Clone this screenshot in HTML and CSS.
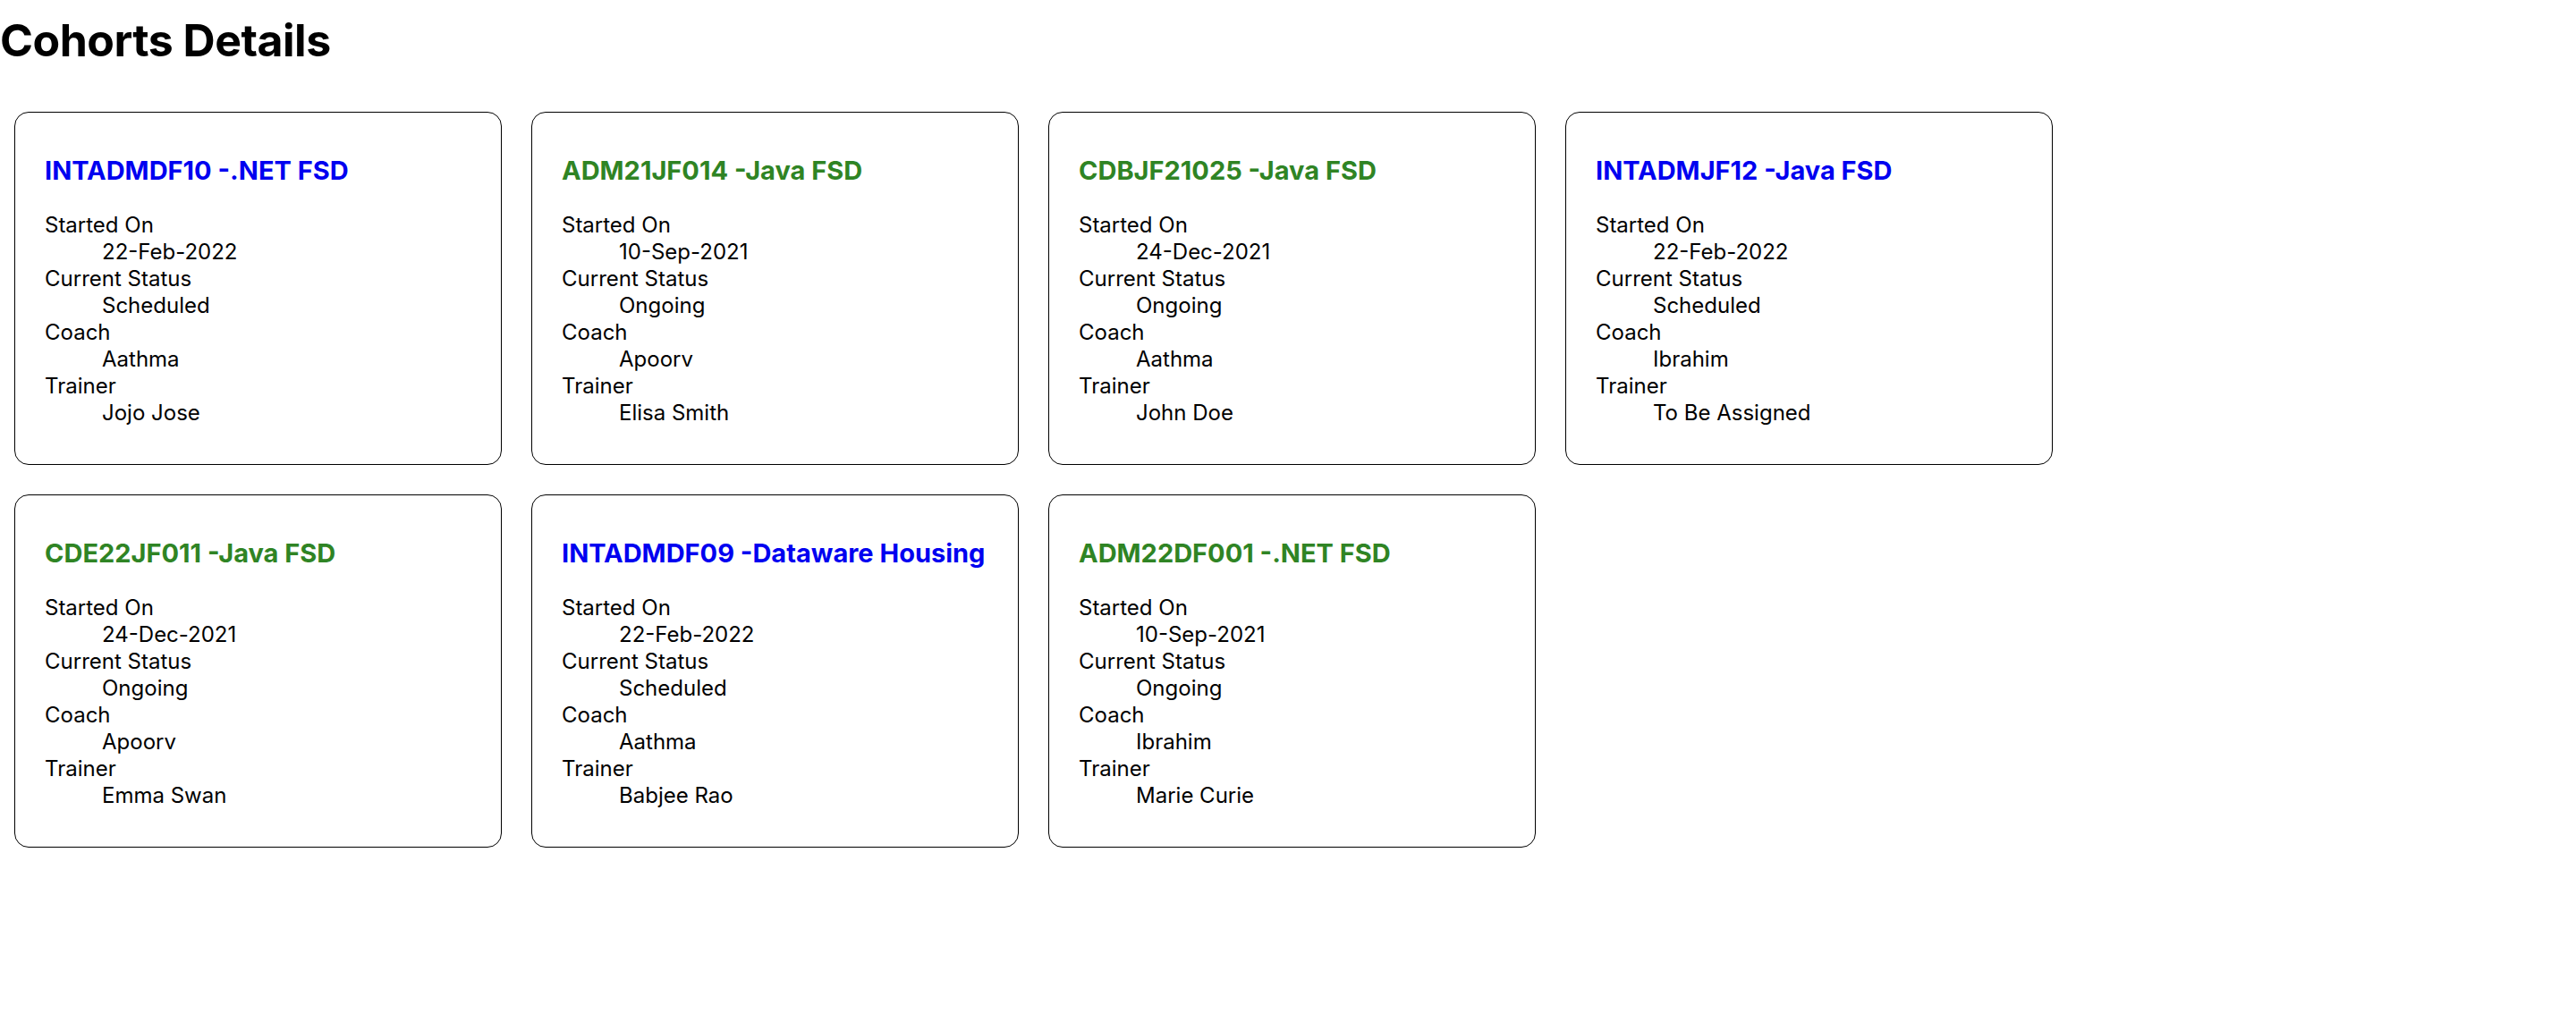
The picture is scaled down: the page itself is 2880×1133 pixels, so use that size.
FILE: index.html
```html
<!DOCTYPE html>
<html lang="en">
<head>
<meta charset="utf-8">
<title>Cohorts Details</title>
<link rel="stylesheet" href="styles.css">
</head>
<body>
<h1 class="page-title">Cohorts Details</h1>
<div class="cohort-grid">
  <div class="cohort-card">
    <h3 class="cohort-name scheduled">INTADMDF10 -.NET FSD</h3>
    <dl class="cohort-info">
      <dt>Started On</dt><dd>22-Feb-2022</dd>
      <dt>Current Status</dt><dd>Scheduled</dd>
      <dt>Coach</dt><dd>Aathma</dd>
      <dt>Trainer</dt><dd>Jojo Jose</dd>
    </dl>
  </div>
  <div class="cohort-card">
    <h3 class="cohort-name ongoing">ADM21JF014 -Java FSD</h3>
    <dl class="cohort-info">
      <dt>Started On</dt><dd>10-Sep-2021</dd>
      <dt>Current Status</dt><dd>Ongoing</dd>
      <dt>Coach</dt><dd>Apoorv</dd>
      <dt>Trainer</dt><dd>Elisa Smith</dd>
    </dl>
  </div>
  <div class="cohort-card">
    <h3 class="cohort-name ongoing">CDBJF21025 -Java FSD</h3>
    <dl class="cohort-info">
      <dt>Started On</dt><dd>24-Dec-2021</dd>
      <dt>Current Status</dt><dd>Ongoing</dd>
      <dt>Coach</dt><dd>Aathma</dd>
      <dt>Trainer</dt><dd>John Doe</dd>
    </dl>
  </div>
  <div class="cohort-card">
    <h3 class="cohort-name scheduled">INTADMJF12 -Java FSD</h3>
    <dl class="cohort-info">
      <dt>Started On</dt><dd>22-Feb-2022</dd>
      <dt>Current Status</dt><dd>Scheduled</dd>
      <dt>Coach</dt><dd>Ibrahim</dd>
      <dt>Trainer</dt><dd>To Be Assigned</dd>
    </dl>
  </div>
  <div class="cohort-card">
    <h3 class="cohort-name ongoing">CDE22JF011 -Java FSD</h3>
    <dl class="cohort-info">
      <dt>Started On</dt><dd>24-Dec-2021</dd>
      <dt>Current Status</dt><dd>Ongoing</dd>
      <dt>Coach</dt><dd>Apoorv</dd>
      <dt>Trainer</dt><dd>Emma Swan</dd>
    </dl>
  </div>
  <div class="cohort-card">
    <h3 class="cohort-name scheduled">INTADMDF09 -Dataware Housing</h3>
    <dl class="cohort-info">
      <dt>Started On</dt><dd>22-Feb-2022</dd>
      <dt>Current Status</dt><dd>Scheduled</dd>
      <dt>Coach</dt><dd>Aathma</dd>
      <dt>Trainer</dt><dd>Babjee Rao</dd>
    </dl>
  </div>
  <div class="cohort-card">
    <h3 class="cohort-name ongoing">ADM22DF001 -.NET FSD</h3>
    <dl class="cohort-info">
      <dt>Started On</dt><dd>10-Sep-2021</dd>
      <dt>Current Status</dt><dd>Ongoing</dd>
      <dt>Coach</dt><dd>Ibrahim</dd>
      <dt>Trainer</dt><dd>Marie Curie</dd>
    </dl>
  </div>
</div>
</body>
</html>
```

FILE: styles.css
```css
html, body {
  margin: 0;
  padding: 0;
  background: #ffffff;
}

body {
  font-family: Inter, "Noto Sans", "Liberation Sans", sans-serif;
  color: #000000;
  font-size: 24px;
}

.page-title {
  margin: 15px 0 0 0;
  font-size: 50px;
  font-weight: 700;
  line-height: 60px;
  letter-spacing: -0.5px;
}

.cohort-grid {
  display: grid;
  grid-template-columns: repeat(4, 545px);
  gap: 33px;
  margin: 50px 0 0 16px;
}

.cohort-card {
  box-sizing: border-box;
  border: 1px solid #000000;
  border-radius: 16px;
  padding: 48px 33px 42px 33px;
}

.cohort-name {
  margin: 0 0 29px 0;
  font-size: 29px;
  font-weight: 700;
  line-height: 34px;
}

.cohort-name.scheduled {
  color: #0000f0;
}

.cohort-name.ongoing {
  color: #2f8424;
}

.cohort-info {
  margin: 0;
  line-height: 30px;
  font-size: 24px;
}

.cohort-info dt {
  margin: 0;
}

.cohort-info dd {
  margin: 0 0 0 64px;
}
```
